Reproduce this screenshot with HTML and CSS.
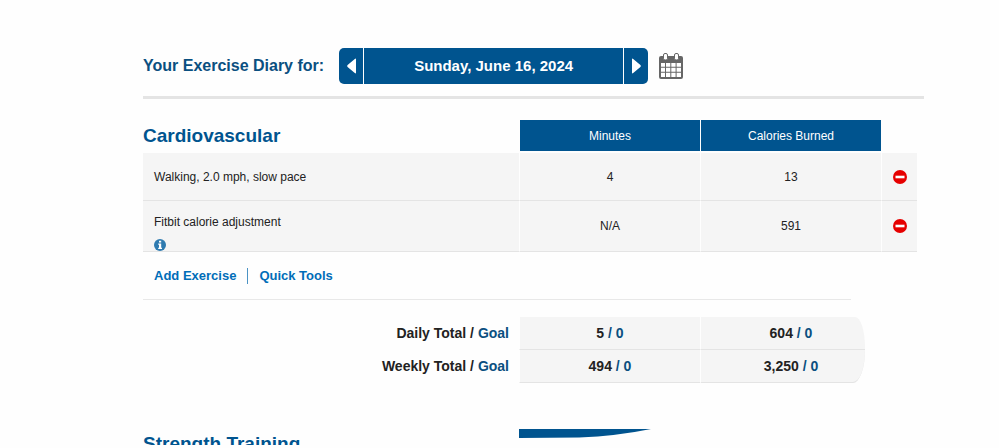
FILE: index.html
```html
<!DOCTYPE html>
<html lang="en">
<head>
    <meta charset="UTF-8">
    <meta name="viewport" content="width=device-width, initial-scale=1.0">
    <title>Exercise Diary</title>
    <link rel="stylesheet" href="styles.css">
</head>
<body>
    <main class="diary">
        <header class="date-header">
            <h1>Your Exercise Diary for:</h1>
            <div class="date-picker">
                <button class="arrow" type="button" aria-label="Previous day">
                    <svg width="9" height="16" viewBox="0 0 9 16"><path d="M9 1.500v13Q9 16 7.800 15L.6 9Q-.2 8 .6 7L7.800 1Q9 0 9 1.500z" fill="#fff"/></svg>
                </button>
                <button class="date" type="button">Sunday, June 16, 2024</button>
                <button class="arrow" type="button" aria-label="Next day">
                    <svg width="9" height="16" viewBox="0 0 9 16"><path d="M0 1.500v13Q0 16 1.200 15L8.400 9Q9.200 8 8.400 7L1.200 1Q0 0 0 1.500z" fill="#fff"/></svg>
                </button>
            </div>
            <button class="calendar" type="button" aria-label="Open calendar">
                <svg width="26" height="28" viewBox="0 0 26 28">
                    <rect x="1" y="4" width="24" height="23" rx="2" fill="#666"/>
                    <g fill="#fff">
                        <path d="M3 11h4v3.700H3zM8 11h4.300v3.700H8zM13.300 11h4.300v3.700h-4.300zM18.600 11H23v3.700h-4.400z"/>
                        <path d="M3 15.700h4v4H3zM8 15.700h4.300v4H8zM13.300 15.700h4.300v4h-4.300zM18.600 15.700H23v4h-4.400z"/>
                        <path d="M3 20.700h4V25H3zM8 20.700h4.300V25H8zM13.300 20.700h4.300V25h-4.300zM18.600 20.700H23V25h-4.400z"/>
                    </g>
                    <rect x="5.500" y="1.500" width="4" height="6.500" rx="1.500" fill="#fff" stroke="#666"/>
                    <rect x="16.500" y="1.500" width="4" height="6.500" rx="1.500" fill="#fff" stroke="#666"/>
                </svg>
            </button>
        </header>

        <table class="exercises">
            <colgroup>
                <col class="col-name">
                <col class="col-value">
                <col class="col-value">
                <col class="col-delete">
            </colgroup>
            <thead>
                <tr>
                    <th class="title" scope="col">Cardiovascular</th>
                    <th scope="col">Minutes</th>
                    <th scope="col">Calories Burned</th>
                    <td></td>
                </tr>
            </thead>
            <tbody>
                <tr>
                    <td class="name">Walking, 2.0 mph, slow pace</td>
                    <td>4</td>
                    <td>13</td>
                    <td>
                        <button class="delete" type="button" aria-label="Delete walking">
                            <svg width="14" height="14" viewBox="0 0 14 14"><circle cx="7" cy="7" r="7" fill="#e60000"/><path d="M2.500 5.700h9v2.600h-9z" fill="#fff"/></svg>
                        </button>
                    </td>
                </tr>
                <tr>
                    <td class="name">
                        Fitbit calorie adjustment
                        <button class="info" type="button" aria-label="About this adjustment">
                            <svg width="12" height="12" viewBox="0 0 12 12"><circle cx="6" cy="6" r="6" fill="#2f7bb0"/><path d="M5 1.800h2.200v1.700H5zM4.200 4.500h3v4.200H8V10H4.200V8.700H5V5.700h-.8z" fill="#fff"/></svg>
                        </button>
                    </td>
                    <td>N/A</td>
                    <td>591</td>
                    <td>
                        <button class="delete" type="button" aria-label="Delete Fitbit calorie adjustment">
                            <svg width="14" height="14" viewBox="0 0 14 14"><circle cx="7" cy="7" r="7" fill="#e60000"/><path d="M2.500 5.700h9v2.600h-9z" fill="#fff"/></svg>
                        </button>
                    </td>
                </tr>
            </tbody>
        </table>

        <nav class="tools">
            <a href="#">Add Exercise</a>
            <a href="#">Quick Tools</a>
        </nav>

        <table class="totals">
            <colgroup>
                <col class="col-name">
                <col class="col-value">
                <col>
            </colgroup>
            <tbody>
                <tr>
                    <th scope="row">Daily Total / <span class="goal">Goal</span></th>
                    <td>5 <span class="goal">/ 0</span></td>
                    <td class="last">604 <span class="goal">/ 0</span></td>
                </tr>
                <tr>
                    <th scope="row">Weekly Total / <span class="goal">Goal</span></th>
                    <td>494 <span class="goal">/ 0</span></td>
                    <td class="last">3,250 <span class="goal">/ 0</span></td>
                </tr>
            </tbody>
        </table>

        <section class="strength">
            <h2>Strength Training</h2>
            <svg class="swoosh" width="132" height="9" viewBox="0 0 132 9"><path d="M0 0h132Q98 7 60 8.500L0 9z" fill="#00548f"/></svg>
        </section>
    </main>
</body>
</html>
```

FILE: styles.css
```css
* {
    box-sizing: border-box;
}

body {
    margin: 0;
    background-color: #fefefe;
    color: #222;
    font-family: "Liberation Sans", Arial, sans-serif;
    font-size: 13px;
    line-height: 16px;
}

button {
    padding: 0;
    border: none;
    background: none;
    color: inherit;
    font: inherit;
    cursor: pointer;
}

svg {
    display: block;
}

.diary {
    margin: 0 75px 0 143px;
    padding-top: 48px;
}

.date-header {
    display: flex;
    align-items: center;
    padding-bottom: 12px;
    border-bottom: 3px solid #e4e4e4;
}

h1 {
    margin: 0;
    color: #0a4f80;
    font-size: 16px;
}

.date-picker {
    display: flex;
    gap: 1px;
    width: 309px;
    height: 36px;
    margin: 0 10px 0 15px;
    border-radius: 5px;
    overflow: hidden;
}

.date-picker button {
    background-color: #00548f;
    color: #fff;
}

.arrow {
    display: flex;
    align-items: center;
    justify-content: center;
    width: 24px;
}

.date-picker .date {
    flex: 1;
    font-size: 15px;
    font-weight: bold;
}

table {
    border-collapse: separate;
    border-spacing: 0;
    table-layout: fixed;
}

.col-name {
    width: 376px;
}

.col-value {
    width: 181px;
}

.exercises {
    width: 774px;
    margin-top: 21px;
    font-size: 12px;
    text-align: center;
}

.exercises th {
    height: 33px;
    padding: 0;
    border-bottom: 2px solid #fefefe;
    border-left: 1px solid #fefefe;
    background-color: #00548f;
    color: #fff;
    font-weight: normal;
}

.exercises .title,
h2 {
    margin: 0;
    border-left: none;
    background: none;
    color: #00548f;
    font-size: 19px;
    font-weight: bold;
    text-align: left;
}

.exercises tbody td {
    height: 48px;
    padding: 0;
    border-bottom: 1px solid #e4e4e4;
    border-left: 1px solid #fefefe;
    background-color: #f5f5f5;
}

.exercises tbody tr + tr td {
    height: 51px;
}

.exercises tbody .name {
    padding-left: 11px;
    border-left: none;
    text-align: left;
}

.info {
    display: block;
    margin-top: 9px;
}

.exercises tbody tr + tr .name {
    padding-top: 13px;
}

.delete {
    display: block;
    margin: 0 auto;
}

.tools {
    display: flex;
    width: 708px;
    padding: 16px 11px 15px;
    border-bottom: 1px solid #e8e8e8;
}

.tools a {
    color: #006db8;
    font-weight: bold;
    text-decoration: none;
}

.tools a + a {
    margin-left: 11px;
    padding-left: 11px;
    border-left: 1px solid #4b93c4;
}

.totals {
    width: 722px;
    margin-top: 17px;
    font-size: 14px;
    font-weight: bold;
    text-align: center;
}

.totals th {
    padding: 0 10px 0 0;
    border-bottom: 1px solid transparent;
    text-align: right;
}

.totals td {
    height: 33px;
    padding: 0;
    border-bottom: 1px solid #e4e4e4;
    border-left: 1px solid #fefefe;
    background-color: #f5f5f5;
}

.totals .last {
    padding-left: 16px;
    border-top-right-radius: 10px 30px;
}

.totals tr + tr .last {
    border-radius: 0 0 12px 0 / 0 0 33px 0;
}

.goal {
    color: #0a4f80;
}

.strength {
    display: flex;
    height: 16px;
    margin-top: 46px;
    overflow: hidden;
}

h2 {
    width: 376px;
    padding-top: 5px;
    line-height: 20px;
}
```
